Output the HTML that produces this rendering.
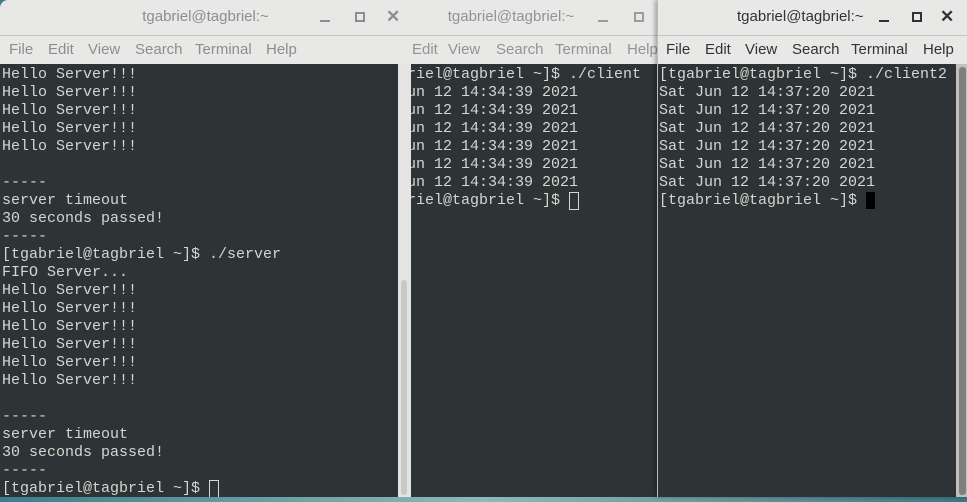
<!DOCTYPE html>
<html><head><style>
body{margin:0;width:967px;height:502px;overflow:hidden;background:#3d7f8a;position:relative;font-family:"Liberation Sans",sans-serif}
.win{position:absolute;top:0;background:#e8e8e7;overflow:hidden}
.title{position:absolute;top:0;left:0;right:0;height:35px;border-bottom:1px solid #c5c5c2;font-size:15px;text-align:center;line-height:34px}
.menu{position:absolute;top:36px;left:0;right:0;height:28px;font-size:15px;line-height:28px}
.menu span{position:absolute;top:0}
.term{position:absolute;top:64px;background:#2e3436;color:#d3d7cf;font-family:"Liberation Mono",monospace;font-size:15px;line-height:18px;white-space:pre;padding-top:2px}
.ic{position:absolute;top:0;font-size:15px;line-height:34px}
.cur{display:inline-block;width:8px;height:16px;border:1px solid #d3d7cf;vertical-align:top;box-sizing:content-box;margin-top:0}
</style></head><body>
<div style="position:absolute;left:0;top:497px;width:967px;height:5px;background:linear-gradient(90deg,#3a7e8c,#8fb8b8 50%,#3e7685)"></div>

<!-- middle window -->
<div class="win" style="left:364px;width:294px;height:497px">
 <div class="title" style="color:#919494">tgabriel@tagbriel:~</div>
 <div style="position:absolute;left:234px;top:20px;width:10px;height:2px;background:#9a9c9c"></div>
 <div style="position:absolute;left:270px;top:12px;width:6px;height:6px;border:2px solid #9a9c9c"></div>
 <div class="menu" style="color:#919494"><span style="left:0">File</span><span style="left:48px">Edit</span><span style="left:84px">View</span><span style="left:132px">Search</span><span style="left:191px">Terminal</span><span style="left:263px">Help</span></div>
 <div class="term" style="left:-2px;width:296px;height:433px">[tgabriel@tagbriel ~]$ ./client
Sat Jun 12 14:34:39 2021
Sat Jun 12 14:34:39 2021
Sat Jun 12 14:34:39 2021
Sat Jun 12 14:34:39 2021
Sat Jun 12 14:34:39 2021
Sat Jun 12 14:34:39 2021
[tgabriel@tagbriel ~]$ <span class="cur"></span></div>
</div>

<!-- left window -->
<div class="win" style="left:0;width:411px;height:497px;border-radius:8px 8px 0 0">
 <div class="title" style="color:#8b8e8f">tgabriel@tagbriel:~</div>
 <div style="position:absolute;left:320px;top:20px;width:10px;height:2px;background:#8b8e8f"></div>
 <div style="position:absolute;left:355px;top:12px;width:6px;height:6px;border:2px solid #8b8e8f"></div>
 <div class="ic" style="left:386px;color:#8b8e8f;font-size:17px;font-weight:bold">&#x2715;</div>
 <div class="menu" style="color:#8b8e8f"><span style="left:9px">File</span><span style="left:48px">Edit</span><span style="left:88px">View</span><span style="left:135px">Search</span><span style="left:195px">Terminal</span><span style="left:266px">Help</span></div>
 <div class="term" style="left:0;width:396px;height:433px;padding-left:2px">Hello Server!!!
Hello Server!!!
Hello Server!!!
Hello Server!!!
Hello Server!!!

-----
server timeout
30 seconds passed!
-----
[tgabriel@tagbriel ~]$ ./server
FIFO Server...
Hello Server!!!
Hello Server!!!
Hello Server!!!
Hello Server!!!
Hello Server!!!
Hello Server!!!

-----
server timeout
30 seconds passed!
-----
[tgabriel@tagbriel ~]$ <span class="cur"></span></div>
 <div style="position:absolute;left:398px;top:64px;width:13px;height:433px;background:#e4e4e2"></div>
 <div style="position:absolute;left:401px;top:280px;width:6px;height:215px;background:#c8c8c6;border-radius:3px"></div>
</div>

<!-- right window -->
<div class="win" style="left:657px;width:310px;height:497px;border-left:1px solid #bbb;box-shadow:-2px 0 4px rgba(0,0,0,.3)">
 <div class="title" style="color:#2e3436;text-align:left;padding-left:79px">tgabriel@tagbriel:~</div>
 <div style="position:absolute;left:221px;top:20px;width:10px;height:2px;background:#2e3436"></div>
 <div style="position:absolute;left:254px;top:12px;width:6px;height:6px;border:2px solid #2e3436"></div>
 <div class="ic" style="left:282px;color:#2e3436;font-size:17px;font-weight:bold">&#x2715;</div>
 <div class="menu" style="color:#2e3436"><span style="left:8px">File</span><span style="left:47px">Edit</span><span style="left:87px">View</span><span style="left:134px">Search</span><span style="left:193px">Terminal</span><span style="left:265px">Help</span></div>
 <div class="term" style="left:0;width:298px;height:433px;padding-left:1px">[tgabriel@tagbriel ~]$ ./client2
Sat Jun 12 14:37:20 2021
Sat Jun 12 14:37:20 2021
Sat Jun 12 14:37:20 2021
Sat Jun 12 14:37:20 2021
Sat Jun 12 14:37:20 2021
Sat Jun 12 14:37:20 2021
[tgabriel@tagbriel ~]$ <span style="display:inline-block;width:9px;height:17px;background:#000;vertical-align:top"></span></div>
 <div style="position:absolute;left:298px;top:64px;width:12px;height:433px;background:#c0c0bd"></div>
 <div style="position:absolute;left:301px;top:67px;width:7px;height:428px;background:#7e8080;border-radius:3px"></div>
</div>
</body></html>
